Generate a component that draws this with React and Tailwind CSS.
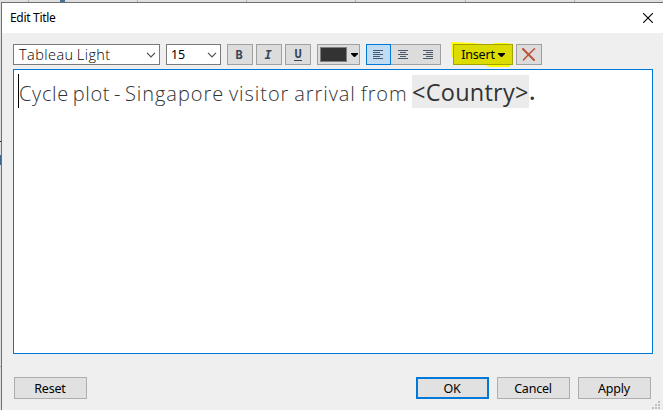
import React from 'react';

function Chevron() {
  return (
    <svg width="10" height="6" viewBox="0 0 10 6" className="shrink-0" fill="none" stroke="#505050" strokeWidth="1.2">
      <path d="M1 .8 L5 4.8 L9 .8" />
    </svg>
  );
}

function Caret() {
  return (
    <svg width="7" height="4" viewBox="0 0 7 4" className="shrink-0">
      <path d="M0 0H7V1L4 4H3L0 1Z" fill="#000" />
    </svg>
  );
}

function ToolButton({ className = 'w-[26px] border-[#a0a0a0] bg-[#dcdcdc]', children }) {
  return (
    <button className={`flex h-[21px] shrink-0 items-center justify-center border ${className}`}>
      {children}
    </button>
  );
}

function AlignIcon({ lines }) {
  return (
    <svg width="10" height="9" viewBox="0 0 10 9" fill="#4a5a6c" shapeRendering="crispEdges">
      {lines.map(([x, w], i) => (
        <rect key={i} x={x} y={i * 2} width={w} height="1" />
      ))}
    </svg>
  );
}

function DialogButton({ className = 'border border-[#adadad]', children }) {
  return (
    <button className={`flex h-[22px] w-[73px] items-center justify-center bg-[#e1e1e1] pr-px pt-[2px] text-[12.5px] leading-none tracking-[-0.2px] ${className}`}>
      {children}
    </button>
  );
}

const leftLines = [[0, 10], [0, 7], [0, 10], [0, 7], [0, 10]];
const centerLines = [[0, 10], [2, 6], [0, 10], [2, 6], [0, 10]];
const rightLines = [[0, 10], [3, 7], [0, 10], [3, 7], [0, 10]];

export default function App() {
  return (
    <div className="relative h-[410px] w-[663px] overflow-hidden bg-[#dfdfdf] pl-px pt-[2px] font-['Noto_Sans','Open_Sans',sans-serif] text-black">
      <svg className="absolute left-0 top-0" width="663" height="410" shapeRendering="crispEdges">
        <path d="M28.5 0V2M137.5 0V2M246.5 0V2M355.5 0V2M465.5 0V2M574.5 0V2" stroke="#b5b5b5" />
        <rect x="60" width="5" height="2" fill="#4a6e96" />
        <rect y="141" width="1" height="1" fill="#222" />
        <rect y="155" width="1" height="10" fill="#3b668f" />
        <rect y="366" width="1" height="1" fill="#aaa" />
      </svg>
      <div className="relative flex h-[408px] w-[662px] flex-col border-l border-t border-[#707070] bg-[#efefef]">
        <header className="flex h-[30px] shrink-0 items-center justify-between bg-white pl-2 pr-[10px]">
          <span className="text-[12px] leading-none tracking-[-0.3px]">Edit Title</span>
          <svg width="10" height="10" viewBox="0 0 10 10" stroke="#000" strokeWidth="1.1">
            <path d="M0 0L10 10M10 0L0 10" />
          </svg>
        </header>

        <div className="mt-[11px] flex h-[21px] shrink-0 pl-[11px]">
          <div className="flex w-[147px] shrink-0 items-center justify-between border border-[#7a7a7a] bg-white pl-[5px] pr-[3px]">
            <span className="whitespace-nowrap pt-px font-['Open_Sans',sans-serif] text-[14.5px] font-light leading-[18px] tracking-[0.45px] [word-spacing:-1px]">Tableau Light</span>
            <Chevron />
          </div>
          <div className="ml-[6px] flex w-[55px] shrink-0 items-center justify-between border border-[#7a7a7a] bg-white pl-1 pr-[3px]">
            <span className="pt-[2px] text-[12.5px] leading-none tracking-[-0.2px]">15</span>
            <Chevron />
          </div>
          <ToolButton className="ml-[6px] w-[26px] border-[#a0a0a0] bg-[#dcdcdc] pr-[2px]">
            <span className="font-['DejaVu_Sans_Mono',monospace] text-[12px] font-bold leading-none text-[#34465a]">B</span>
          </ToolButton>
          <ToolButton className="ml-[3px] w-[26px] border-[#a0a0a0] bg-[#dcdcdc] pr-[2px]">
            <span className="font-['DejaVu_Sans_Mono',monospace] text-[12px] font-bold italic leading-none text-[#34465a]">I</span>
          </ToolButton>
          <ToolButton className="ml-[3px] w-[26px] border-[#a0a0a0] bg-[#dcdcdc]">
            <span className="border-b border-[#34465a] font-['DejaVu_Sans_Mono',monospace] text-[12px] font-bold leading-[11px] text-[#34465a]">U</span>
          </ToolButton>
          <button className="ml-[6px] flex w-[43px] shrink-0 items-center justify-between border border-[#a0a0a0] bg-[#dcdcdc] pl-[2px] pr-px">
            <span className="h-[15px] w-[27px] border border-[#808080] bg-[#333]" />
            <Caret />
          </button>
          <ToolButton className="relative z-10 ml-[6px] w-[25px] border-[#0078d7] bg-[#c0dcf3] pr-px">
            <AlignIcon lines={leftLines} />
          </ToolButton>
          <ToolButton className="w-[25px] border-[#a0a0a0] border-x-0 bg-[#dcdcdc] pr-px">
            <AlignIcon lines={centerLines} />
          </ToolButton>
          <ToolButton className="w-[25px] border-[#a0a0a0] border-l-0 bg-[#dcdcdc]">
            <AlignIcon lines={rightLines} />
          </ToolButton>
          <div className="relative ml-3 w-[60px] shrink-0">
            <svg className="absolute -left-[2px] -top-[2px]" width="62" height="29">
              <path d="M0 0L22 1L41 3L43 1L59 1V25H50L45 25L39 25L34 23L26 22L7 18V16L0 15Z" fill="#ffff00" />
            </svg>
            <button className="relative flex h-[21px] w-[60px] items-center justify-center gap-[3px] border border-[#a2a200] bg-[#dcdc00] text-[12.5px] leading-none tracking-[-0.2px]">
              <span className="pt-[2px]">Insert</span>
              <Caret />
            </button>
          </div>
          <ToolButton className="ml-[3px] w-[26px] border-[#a0a0a0] bg-[#dcdcdc]">
            <svg width="14" height="13" viewBox="0 0 14 13" fill="none" stroke="#bd5134" strokeLinecap="round">
              <path d="M1 1L7 7L12 12" strokeWidth="2" />
              <path d="M12.5 .8L6.5 6.5L1.5 12" strokeWidth="1.5" />
            </svg>
          </ToolButton>
        </div>

        <main className="ml-[11px] mt-[4px] h-[285px] w-[640px] shrink-0 border border-[#0078d7] bg-white pl-1 pt-1">
          <div className="flex h-[34px] items-center whitespace-nowrap border-l border-black text-[#333]">
            <span className="w-[393px] shrink-0 pt-[6px] font-['Open_Sans',sans-serif] text-[20px] font-light leading-none tracking-[0.95px] [word-spacing:-1.3px]"><span className="tracking-[0.65px] [word-spacing:-2px]">Cycle plot - </span>Singapore visitor arrival from</span>
            <span className="h-[33px] w-[117px] shrink-0 bg-[#ebebeb] font-['Open_Sans',sans-serif] text-[23.5px] font-medium leading-[34px] tracking-[0.25px]">&lt;Country&gt;</span>
            <span className="font-['Open_Sans',sans-serif] text-[23.5px] font-semibold leading-[34px]">.</span>
          </div>
        </main>

        <footer className="mt-[23px] flex shrink-0 pl-3">
          <DialogButton>Reset</DialogButton>
          <div className="ml-[329px] flex gap-2">
            <DialogButton className="border-2 border-[#0078d7]">OK</DialogButton>
            <DialogButton>Cancel</DialogButton>
            <DialogButton>Apply</DialogButton>
          </div>
        </footer>
        <svg className="absolute bottom-px right-[3px]" width="8" height="8" fill="#bfbfbf" shapeRendering="crispEdges">
          <path d="M6 0h2v2h-2zM3 3h2v2h-2zM6 3h2v2h-2zM0 6h2v2h-2zM3 6h2v2h-2zM6 6h2v2h-2z" />
        </svg>
      </div>
    </div>
  );
}
